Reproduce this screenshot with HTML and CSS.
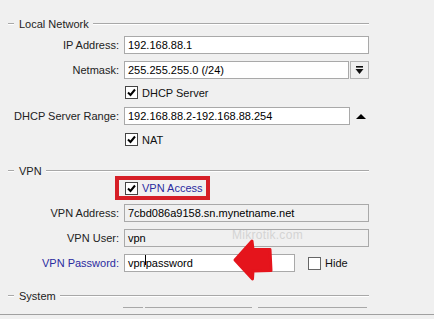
FILE: index.html
```html
<!DOCTYPE html>
<html>
<head>
<meta charset="utf-8">
<link rel="stylesheet" href="styles.css">
</head>
<body>
<div class="panel">
  <div class="sect s-local"><span class="dash"></span><span class="sect-title">Local Network</span><span class="rule"></span></div>

  <div class="row r-ip"><span class="lbl">IP Address:</span><div class="field"><span class="inp full">192.168.88.1</span></div></div>

  <div class="row r-mask"><span class="lbl">Netmask:</span><div class="field"><span class="inp mask">255.255.255.0 (/24)</span><span class="drop"><svg width="9" height="9" viewBox="0 0 9 9"><rect x="1" y="0" width="7" height="1.6" fill="#111"/><path d="M0.5 3 H8.5 L4.5 8 Z" fill="#111"/></svg></span></div></div>

  <div class="row r-dhcp"><span class="lbl"></span><div class="field"><span class="cb on"><svg width="11" height="11" viewBox="0 0 11 11"><path d="M2 5.5 L4.5 8 L9 2.5" fill="none" stroke="#000" stroke-width="2"/></svg></span><span class="cbl">DHCP Server</span></div></div>

  <div class="row r-range"><span class="lbl">DHCP Server Range:</span><div class="field"><span class="inp range">192.168.88.2-192.168.88.254</span><span class="tri"></span></div></div>

  <div class="row r-nat"><span class="lbl"></span><div class="field"><span class="cb on"><svg width="11" height="11" viewBox="0 0 11 11"><path d="M2 5.5 L4.5 8 L9 2.5" fill="none" stroke="#000" stroke-width="2"/></svg></span><span class="cbl">NAT</span></div></div>

  <div class="sect s-vpn"><span class="dash"></span><span class="sect-title">VPN</span><span class="rule"></span></div>

  <div class="row r-access"><span class="lbl"></span><div class="field"><span class="redbox"><span class="cb on"><svg width="11" height="11" viewBox="0 0 11 11"><path d="M2 5.5 L4.5 8 L9 2.5" fill="none" stroke="#000" stroke-width="2"/></svg></span><span class="cbl blue">VPN Access</span></span></div></div>

  <div class="row r-addr"><span class="lbl">VPN Address:</span><div class="field"><span class="inp full ro">7cbd086a9158.sn.mynetname.net</span></div></div>

  <div class="row r-user"><span class="lbl">VPN User:</span><div class="field"><span class="inp full ro">vpn<span class="wm">Mikrotik.com</span></span></div></div>

  <div class="row r-pass"><span class="lbl blue">VPN Password:</span><div class="field"><span class="inp pass">vpnpassword<span class="caret"></span></span><span class="cb off"></span><span class="cbl">Hide</span></div></div>

  <div class="sect s-sys"><span class="dash"></span><span class="sect-title">System</span><span class="rule"></span></div>

  <div class="cut"><span class="seg a"></span><span class="seg b"></span><span class="seg c"></span></div>
  <div class="bottom"></div>

  <svg class="arrow" width="44" height="46" viewBox="232 238 44 46"><path d="M235 260 L252 241 L253 249.5 L270 249.5 L271 270.5 L253 271 L252.5 279 Z" fill="#e5141c" stroke="#e5141c" stroke-width="3" stroke-linejoin="round"/></svg>
</div>
</body>
</html>
```
FILE: styles.css
```css
html, body {
  margin: 0;
  padding: 0;
  background: #f0f0f0;
}
body {
  width: 434px;
  height: 320px;
  overflow: hidden;
  font-family: "Liberation Sans", Arial, sans-serif;
  font-size: 11px;
  color: #111;
}
.panel {
  position: relative;
  display: flex;
  flex-direction: column;
  height: 320px;
}
.sect {
  display: flex;
  align-items: center;
  width: 369px;
  height: 12px;
  line-height: 12px;
}
.dash {
  width: 6px;
  margin-left: 8px;
  border-top: 1px solid #a8a8a8;
  border-bottom: 1px solid #fff;
}
.sect-title {
  padding: 0 4px 0 5px;
  color: #222;
}
.rule {
  flex: 1;
  border-top: 1px solid #a8a8a8;
  border-bottom: 1px solid #fff;
}
.s-local { margin-top: 18px; }
.s-vpn { margin-top: 19px; }
.s-sys { margin-top: 18px; }

.row {
  display: grid;
  grid-template-columns: 119px 1fr;
  column-gap: 5px;
  align-items: center;
}
.lbl {
  text-align: right;
  color: #222;
  white-space: nowrap;
}
.blue { color: #2b2ba0; }
.field {
  display: flex;
  align-items: center;
  height: 100%;
}
.inp {
  position: relative;
  box-sizing: border-box;
  height: 18px;
  line-height: 16px;
  padding-left: 3px;
  background: #fff;
  border: 1px solid #a9a9a9;
  color: #000;
  white-space: nowrap;
  overflow: visible;
}
.inp.ro { background: #f0f0f0; }
.full { width: 245px; }
.mask { width: 225px; }
.range { width: 226px; }
.pass { width: 171px; }
.drop {
  box-sizing: border-box;
  width: 19px;
  height: 18px;
  margin-left: 1px;
  border: 1px solid #b4b4b4;
  display: flex;
  align-items: center;
  justify-content: center;
}
.tri {
  width: 0;
  height: 0;
  margin-left: 6px;
  border-left: 5px solid transparent;
  border-right: 5px solid transparent;
  border-bottom: 5px solid #000;
}
.cb {
  box-sizing: border-box;
  width: 13px;
  height: 13px;
  margin-left: 1px;
  background: #fff;
  border: 1px solid #444;
  display: flex;
  align-items: center;
  justify-content: center;
}
.cb.off {
  margin-left: 13px;
  border-color: #666;
}
.cbl {
  margin-left: 4px;
  color: #111;
}
.cbl.blue { color: #2b2ba0; }

.r-ip { height: 18px; margin-top: 6px; }
.r-mask { height: 18px; margin-top: 7px; }
.r-dhcp { height: 13px; margin-top: 7px; }
.r-range { height: 18px; margin-top: 8px; }
.r-nat { height: 13px; margin-top: 8px; }
.r-access { height: 24px; margin-top: -1px; }
.r-addr { height: 18px; margin-top: 4px; }
.r-user { height: 18px; margin-top: 7px; }
.r-pass { height: 18px; margin-top: 7px; }

.redbox {
  display: flex;
  align-items: center;
  box-sizing: border-box;
  height: 24px;
  width: 95px;
  margin-left: -9px;
  padding-left: 6px;
  border: 4px solid #d61f27;
}
.redbox .cb { margin-left: 0; }
.redbox .cbl { margin-left: 4px; }

.wm {
  position: absolute;
  left: 107px;
  top: -3px;
  color: #d4d4d4;
  font-size: 12px;
  letter-spacing: 0.3px;
}
.caret {
  position: absolute;
  left: 20px;
  top: 0;
  width: 1px;
  height: 10px;
  background: #000;
}

.cut {
  display: flex;
  margin-top: 5px;
  height: 1px;
}
.seg {
  height: 0;
  border-top: 1px solid #a8a8a8;
}
.seg.a { margin-left: 123px; width: 20px; }
.seg.b { margin-left: 2px; width: 107px; }
.seg.c { margin-left: 6px; width: 109px; }
.bottom {
  margin-top: 6px;
  border-top: 1px solid #a0a0a0;
  border-bottom: 1px solid #fff;
  flex: 1;
}
.arrow {
  position: absolute;
  left: 232px;
  top: 238px;
}
```
